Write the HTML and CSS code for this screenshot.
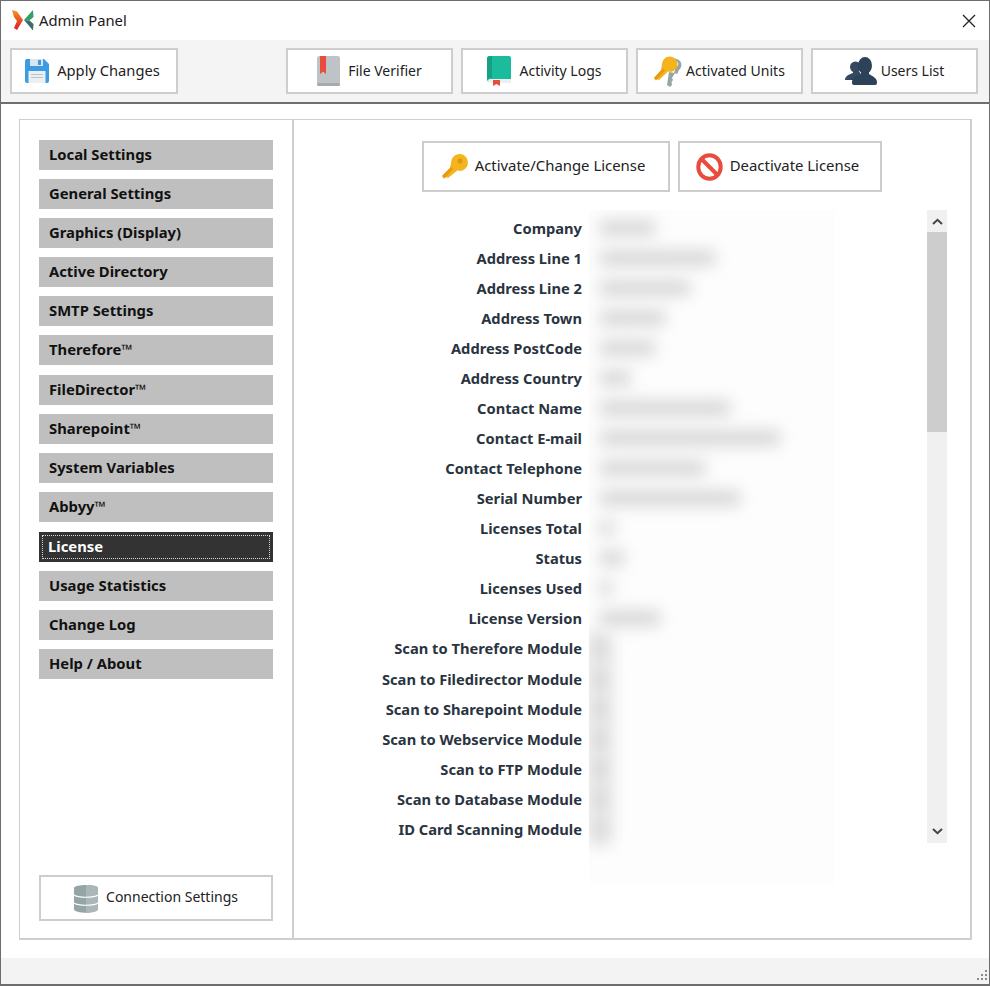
FILE: index.html
```html
<!DOCTYPE html>
<html lang="en">
<head>
<meta charset="utf-8">
<title>Admin Panel</title>
<link rel="stylesheet" href="styles.css">
</head>
<body>
<div class="window">
  <header class="titlebar">
    <svg class="logo" viewBox="0 0 22 21" width="22" height="21">
      <defs><linearGradient id="lg" x1="0" y1="0" x2="0" y2="1"><stop offset="0" stop-color="#f39a1f"/><stop offset="0.55" stop-color="#ea4a25"/><stop offset="1" stop-color="#d3202e"/></linearGradient></defs>
      <path d="M0 0 L5 1.5 L11 10 L5 20 L2 18 L5 11 L2 7 Z" fill="url(#lg)"/>
      <path d="M21 0 L21.5 7 L17.5 10.5 L12 10 Z" fill="#35a063"/>
      <path d="M12 10 L17.5 10.5 L21.5 14 L21 20.5 Z" fill="#3e6a70"/>
    </svg>
    <span class="title">Admin Panel</span>
    <svg class="close" viewBox="0 0 14 14" width="14" height="14"><path d="M1 1 L13 13 M13 1 L1 13" stroke="#222" stroke-width="1.3" fill="none"/></svg>
  </header>

  <nav class="toolbar">
    <button class="btn btn-apply">
      <svg class="ico" viewBox="0 0 24 24" width="24" height="24">
        <path d="M2 0 H19 L24 5 V22 A2 2 0 0 1 22 24 H2 A2 2 0 0 1 0 22 V2 A2 2 0 0 1 2 0 Z" fill="#3d9be4"/>
        <rect x="5" y="0" width="13" height="7" fill="#d8e6f0"/><rect x="13" y="1" width="3" height="5" fill="#3d9be4"/>
        <rect x="3.5" y="12" width="17" height="12" fill="#eceff1"/>
        <path d="M6 15.5 H18 M6 18.5 H18" stroke="#bcc5cb" stroke-width="1.2"/>
      </svg>
      <span class="lbl">Apply Changes</span>
    </button>
    <button class="btn btn-push">
      <svg class="ico" viewBox="0 0 23 30" width="23" height="30">
        <rect width="23" height="30" rx="2.5" fill="#bdc3c7"/>
        <rect y="27" width="23" height="3" rx="1.5" fill="#a4aaae"/>
        <path d="M3 0 H9 V18 L6 15.5 L3 18 Z" fill="#e74c3c"/>
      </svg>
      <span class="lbl">File Verifier</span>
    </button>
    <button class="btn">
      <svg class="ico" viewBox="0 0 24 30" width="24" height="30">
        <path d="M3 0 H22 A2 2 0 0 1 24 2 V26 H3 A3 3 0 0 1 0 23 V3 A3 3 0 0 1 3 0 Z" fill="#1abc9c"/>
        <path d="M3 0 H5 V22 H3 A3 3 0 0 0 0 24 V3 A3 3 0 0 1 3 0 Z" fill="#16a085"/>
        <path d="M3 23 H24 V27 H3 A2 2 0 0 1 3 23 Z" fill="#ecf0f1"/>
        <path d="M6 24 H13 V30 L9.5 28 L6 30 Z" fill="#e74c3c"/>
      </svg>
      <span class="lbl">Activity Logs</span>
    </button>
    <button class="btn btn-tight">
      <svg class="ico" viewBox="0 0 28 32" width="28" height="32">
        <path d="M15 17 L13 30 L16 32 L18 30 L17.5 27 L19 25 L18 23 L21 18 Z" fill="#95a5a6"/>
        <path d="M17 5 A6 6 0 1 1 25 15 L23 19 L20 18 L22 12 A3.2 3.2 0 1 0 18 8 Z" fill="#95a5a6"/>
        <path d="M8 9 A7.8 7.8 0 1 1 17 17 L14 16.5 L5 25 L3 24 L1.5 25.5 L0 23 L7 15 Z" fill="#f4b41e"/>
        <path d="M0 23 L9 13.5 L11 15.5 L2.5 25 Z" fill="#e89a12"/>
      </svg>
      <span class="lbl">Activated Units</span>
    </button>
    <button class="btn btn-tight">
      <svg class="ico" viewBox="0 0 32 28" width="32" height="28">
        <circle cx="10.5" cy="10" r="5.5" fill="#34495e"/>
        <path d="M8 13 V16 C4 17.5 0 19 0 23 H10 L16 17 L13 13 Z" fill="#34495e"/>
        <ellipse cx="20" cy="8.5" rx="7" ry="8.5" fill="#2c4259"/>
        <path d="M16 14 V17 C12 19 7 21 7 25 V26 Q7 28 9 28 H30 Q32 28 32 26 V25 C32 21 27 19 24 17 V14 Z" fill="#2c4259"/>
      </svg>
      <span class="lbl">Users List</span>
    </button>
  </nav>

  <main class="content">
    <section class="panel">
      <aside class="sidebar">
        <ul class="menu">
          <li class="menu-item">Local Settings</li>
          <li class="menu-item">General Settings</li>
          <li class="menu-item">Graphics (Display)</li>
          <li class="menu-item">Active Directory</li>
          <li class="menu-item">SMTP Settings</li>
          <li class="menu-item">Therefore™</li>
          <li class="menu-item menu-step">FileDirector™</li>
          <li class="menu-item">Sharepoint™</li>
          <li class="menu-item">System Variables</li>
          <li class="menu-item">Abbyy™</li>
          <li class="menu-item menu-step active"><span class="focus">License</span></li>
          <li class="menu-item">Usage Statistics</li>
          <li class="menu-item">Change Log</li>
          <li class="menu-item">Help / About</li>
        </ul>
        <button class="btn btn-conn">
          <svg class="ico" viewBox="0 0 24 29" width="24" height="29">
            <path d="M0 4 C0 0 24 0 24 4 V25 C24 30 0 30 0 25 Z" fill="#95a5a6"/>
            <path d="M12 1 C18 1 24 2 24 4 V25 C24 27 18 28.5 12 28.5 Z" fill="#aab6b7"/>
            <path d="M0 11 C4 14 20 14 24 11 M0 19 C4 22 20 22 24 19" stroke="#fff" stroke-width="1.1" fill="none"/>
          </svg>
          <span class="lbl">Connection Settings</span>
        </button>
      </aside>

      <div class="detail">
        <div class="actions">
          <button class="btn btn-lic btn-activate">
            <svg class="ico" viewBox="0 0 26 25" width="26" height="25">
              <path d="M9 9 A8.5 8.5 0 1 1 17 17 L16 16 L6 24 L4 23 L2 25 L0 22 L8 14 Z" fill="#f4b41e"/>
              <circle cx="18" cy="7" r="2.5" fill="#d99a10"/>
              <path d="M0 22 L9 13 L11 15 L3 24 Z" fill="#e89a12"/>
            </svg>
            <span class="lbl">Activate/Change License</span>
          </button>
          <button class="btn btn-lic btn-deact">
            <svg class="ico" viewBox="0 0 27 28" width="27" height="28">
              <ellipse cx="13.5" cy="14" rx="11.2" ry="11.7" fill="#fff" stroke="#e74c3c" stroke-width="4"/>
              <path d="M6 6.5 L21 21.5" stroke="#e74c3c" stroke-width="4"/>
            </svg>
            <span class="lbl">Deactivate License</span>
          </button>
        </div>

        <div class="records">
          <div class="labels">
            <div class="label">Company</div>
            <div class="label">Address Line 1</div>
            <div class="label">Address Line 2</div>
            <div class="label">Address Town</div>
            <div class="label">Address PostCode</div>
            <div class="label">Address Country</div>
            <div class="label">Contact Name</div>
            <div class="label">Contact E-mail</div>
            <div class="label">Contact Telephone</div>
            <div class="label">Serial Number</div>
            <div class="label">Licenses Total</div>
            <div class="label">Status</div>
            <div class="label">Licenses Used</div>
            <div class="label">License Version</div>
            <div class="label">Scan to Therefore Module</div>
            <div class="label step">Scan to Filedirector Module</div>
            <div class="label">Scan to Sharepoint Module</div>
            <div class="label">Scan to Webservice Module</div>
            <div class="label">Scan to FTP Module</div>
            <div class="label">Scan to Database Module</div>
            <div class="label">ID Card Scanning Module</div>
          </div>
          <div class="values">
            <div class="value"><i style="width:55px"></i></div>
            <div class="value"><i style="width:115px"></i></div>
            <div class="value"><i style="width:90px"></i></div>
            <div class="value"><i style="width:65px"></i></div>
            <div class="value"><i style="width:55px"></i></div>
            <div class="value"><i style="width:30px"></i></div>
            <div class="value"><i style="width:130px"></i></div>
            <div class="value"><i style="width:180px"></i></div>
            <div class="value"><i style="width:105px"></i></div>
            <div class="value"><i style="width:140px"></i></div>
            <div class="value"><i style="width:14px"></i></div>
            <div class="value"><i style="width:24px"></i></div>
            <div class="value"><i style="width:12px"></i></div>
            <div class="value"><i style="width:60px"></i></div>
            <div class="value mod"><i></i></div>
            <div class="value mod step"><i></i></div>
            <div class="value mod"><i></i></div>
            <div class="value mod"><i></i></div>
            <div class="value mod"><i></i></div>
            <div class="value mod"><i></i></div>
            <div class="value mod"><i></i></div>
          </div>
          <div class="scrollbar">
            <svg class="arrow" viewBox="0 0 11 7" width="11" height="7"><path d="M1 6 L5.5 1.8 L10 6" stroke="#444" stroke-width="2" fill="none"/></svg>
            <div class="thumb"></div>
            <svg class="arrow arrow-down" viewBox="0 0 11 7" width="11" height="7"><path d="M1 1 L5.5 5.2 L10 1" stroke="#444" stroke-width="2" fill="none"/></svg>
          </div>
        </div>
      </div>
    </section>
  </main>

  <footer class="statusbar">
    <svg class="grip" viewBox="0 0 12 12" width="12" height="12">
      <g fill="#8a8a8a"><rect x="9" y="0" width="2" height="2"/><rect x="5" y="4" width="2" height="2"/><rect x="9" y="4" width="2" height="2"/><rect x="1" y="8" width="2" height="2"/><rect x="5" y="8" width="2" height="2"/><rect x="9" y="8" width="2" height="2"/></g>
    </svg>
  </footer>
</div>
</body>
</html>
```
FILE: styles.css
```css
* { box-sizing: border-box; }
html, body { margin: 0; padding: 0; background: #fff; }
body { font-family: "Noto Sans", "Open Sans", "Liberation Sans", sans-serif; color: #222; }

.window {
  width: 990px; height: 986px;
  border: 1px solid #6d6d6d;
  border-bottom-width: 2px;
  display: flex; flex-direction: column;
  background: #fff;
}

.titlebar { height: 39px; display: flex; align-items: center; padding: 0 13px 0 11px; flex: none; }
.logo { flex: none; margin-top: -1px; }
.title { margin: -2px 0 0 5px; font-size: 14.8px; color: #1a1a1a; }
.close { margin-left: auto; }

.toolbar {
  height: 64px; flex: none;
  background: #f4f4f4;
  border-bottom: 2px solid #6f6f6f;
  display: flex; gap: 8px;
  padding: 8px 0 0 9px;
}

.btn {
  display: flex; align-items: center; justify-content: center; gap: 8px;
  width: 167px; height: 46px;
  background: #fff;
  border: 2px solid #cdcdcd;
  font-family: inherit; font-size: 14px; color: #222;
  padding: 0;
}
.lbl { margin-top: -2px; }
.btn-apply { width: 168px; font-size: 14.7px; padding-right: 3px; }
.btn-push { margin-left: 100px; }
.btn-tight { gap: 4px; }
.ico { flex: none; }

.content { flex: 1; padding: 15px 18px 18px 18px; min-height: 0; }
.panel {
  height: 821px; width: 953px;
  border: 2px solid #cfcfcf;
  border-width: 1px 2px 2px 1px;
  display: flex;
}

.sidebar {
  width: 274px; flex: none;
  border-right: 2px solid #cfcfcf;
  padding: 20px 19px 17px 19px;
  display: flex; flex-direction: column; justify-content: space-between;
}
.menu { list-style: none; margin: 0; padding: 0; display: flex; flex-direction: column; gap: 9px; }
.menu-item {
  height: 30px; padding: 0 10px 2px;
  background: #bfbfbf;
  display: flex; align-items: center;
  font-weight: 700; font-size: 14.8px; color: #111;
  white-space: nowrap;
}
.menu-step { margin-top: 1px; }
.menu-item.active { background: #333; color: #fff; padding: 3px; }
.focus {
  flex: 1; height: 100%;
  border: 1px dotted #d8d8d8;
  display: flex; align-items: center; padding: 0 5px 2px;
}
.btn-conn { width: 234px; height: 46px; flex: none; }
.btn-conn .lbl { margin-top: -4px; }

.detail { flex: 1; min-width: 0; display: flex; flex-direction: column; }
.actions { display: flex; gap: 8px; padding: 21px 0 0 128px; }
.btn-lic { height: 51px; font-size: 14.9px; padding-right: 5px; gap: 7px; }
.btn-lic .lbl { margin-top: -4px; }
.btn-activate { width: 248px; }
.btn-deact { width: 204px; }

.records { display: flex; margin-top: 18px; align-items: flex-start; }
.labels { width: 288px; flex: none; padding-top: 3px; }
.label {
  height: 30px; line-height: 30px;
  text-align: right;
  font-weight: 700; font-size: 14.7px; color: #2a3440;
  white-space: nowrap;
}
.step { margin-top: 1px; }

.values {
  width: 246px; height: 675px; flex: none;
  margin-left: 7px; padding-top: 3px;
  overflow: hidden;
  background: #fdfdfd;
}
.value { height: 30px; display: flex; align-items: center; padding-left: 11px; }
.value i { display: block; height: 14px; background: #d2d2d2; filter: blur(8px); }
.value.mod { padding-left: 0; }
.value.mod i { width: 22px; height: 30px; background: #d9d9d9; }

.scrollbar {
  width: 20px; height: 633px; flex: none;
  margin-left: 92px;
  background: #f0f0f0;
  display: flex; flex-direction: column; align-items: center;
}
.arrow { flex: none; margin-top: 8px; margin-bottom: 7px; }
.arrow-down { margin-top: auto; margin-bottom: 8px; }
.thumb { width: 20px; height: 200px; background: #cdcdcd; flex: none; }

.statusbar {
  height: 26px; flex: none;
  background: #f3f3f3;
  display: flex; align-items: flex-end; justify-content: flex-end;
  padding: 0 1px 2px 0;
}
.grip { display: block; }
```
